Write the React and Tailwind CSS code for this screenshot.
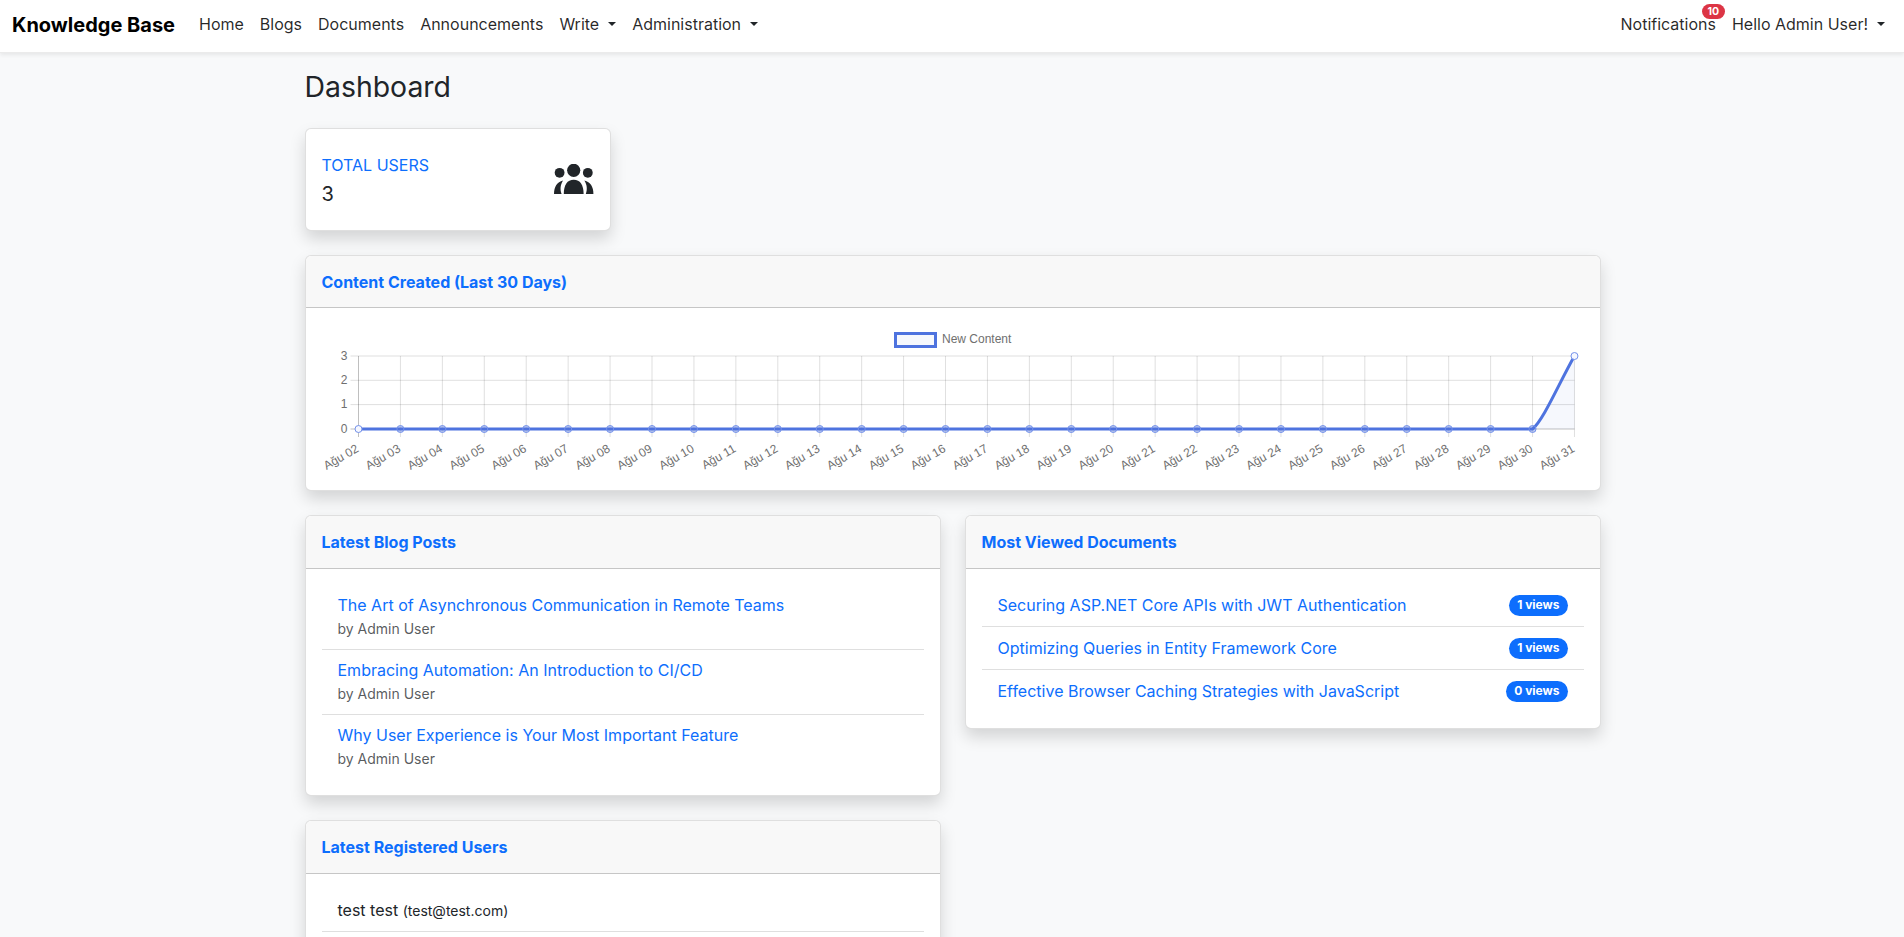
import React from 'react';

const days = Array.from({ length: 30 }, (_, i) => String(i + 2).padStart(2, '0'));
const xAt = (i) => 358.5 + i * 41.93 - 306;

const navLinkClass = 'px-2 text-[16px] text-[#000000d9] leading-6 whitespace-nowrap';

function NavDropdown({ label }) {
  return (
    <span className={`${navLinkClass} flex items-center`}>
      {label}
      <span className="ml-[9px] w-0 h-0 border-x-[4px] border-x-transparent border-t-[4px] border-t-[#212529]" />
    </span>
  );
}

function UsersIcon() {
  return (
    <svg width="40" height="30" viewBox="0 0 40 30" fill="#212529" className="block mb-[2px]">
      <circle cx="19.7" cy="6.3" r="6.6" />
      <circle cx="5.6" cy="8.8" r="4.9" />
      <circle cx="33.8" cy="8.8" r="4.9" />
      <path d="M9.8 30C9.8 21 13.2 15.8 19.7 15.8C26.2 15.8 29.6 21 29.6 30Z" />
      <path d="M0 30C0 23 3 18 9 16.6C6.2 21 6 26 7.6 30Z" />
      <path d="M39.4 30C39.4 23 36.4 18 30.4 16.6C33.2 21 33.4 26 31.8 30Z" />
    </svg>
  );
}

function Card({ title, children, className = '', headerClass = 'h-[53px]' }) {
  return (
    <div className={`bg-white border border-[#00000020] rounded-md shadow-[0_8px_16px_rgba(0,0,0,0.15)] ${className}`}>
      <div className={`bg-[#f8f8f8] border-b border-[#00000033] rounded-t-md px-4 flex items-center ${headerClass}`}>
        <h6 className="text-[16px] font-bold text-[#0d6efd]">{title}</h6>
      </div>
      {children}
    </div>
  );
}

function ContentChart() {
  const ys = [429, 404.6, 380.3, 356];
  const x28 = xAt(28);
  const x29 = xAt(29);
  const curve = `C${x28 + 11} 420 ${x28 + 26} 384 ${x29} 356`;
  return (
    <svg width="1294" height="182" viewBox="0 0 1294 182" className="block">
      <g transform="translate(0,-308)">
        <rect x="589.5" y="333.5" width="40" height="13" fill="#4e73df0d" stroke="#4e73df" strokeWidth="3" />
        <text x="636" y="343" fontSize="12" fill="#6f6f6f" fontFamily="Liberation Sans, sans-serif">New Content</text>
        {ys.map((y, i) => (
          <g key={y}>
            <line x1={xAt(0) - 8} x2={x29} y1={y} y2={y} stroke={i === 0 ? '#00000040' : '#00000020'} strokeWidth="1" />
            <text x={xAt(0) - 11} y={y + 3.5} fontSize="12" fill="#6f6f6f" textAnchor="end" fontFamily="Liberation Sans, sans-serif">{i}</text>
          </g>
        ))}
        {days.map((d, i) => (
          <g key={d}>
            <line x1={xAt(i)} x2={xAt(i)} y1="356" y2="437" stroke={i === 0 ? '#00000040' : '#00000020'} strokeWidth="1" />
            <text
              x={xAt(i) + 1}
              y="451"
              fontSize="12"
              fill="#6f6f6f"
              textAnchor="end"
              transform={`rotate(-30 ${xAt(i) + 1} 451)`}
              fontFamily="Liberation Sans, sans-serif"
            >
              Ağu {d}
            </text>
          </g>
        ))}
        <path d={`M${x28} 429 ${curve} L${x29} 429 Z`} fill="#4e73df0d" />
        <path d={`M${xAt(0)} 429 L${x28} 429 ${curve}`} fill="none" stroke="#4e73df" strokeWidth="3" />
        {days.map((d, i) => (
          <circle
            key={d}
            cx={xAt(i)}
            cy={i === 29 ? 356 : 429}
            r="3.5"
            fill={i === 0 || i === 29 ? '#f5f7ff' : '#4e73df55'}
            stroke="#7391ea"
            strokeWidth="1"
          />
        ))}
      </g>
    </svg>
  );
}

const posts = [
  'The Art of Asynchronous Communication in Remote Teams',
  'Embracing Automation: An Introduction to CI/CD',
  'Why User Experience is Your Most Important Feature',
];

const documents = [
  ['Securing ASP.NET Core APIs with JWT Authentication', '1 views'],
  ['Optimizing Queries in Entity Framework Core', '1 views'],
  ['Effective Browser Caching Strategies with JavaScript', '0 views'],
];

export default function App() {
  return (
    <div className="h-screen overflow-hidden bg-[#f8f9fa] text-[#212529] text-[16px] leading-6 font-['Inter',sans-serif]">
      {/* Navbar */}
      <nav className="relative z-10 h-[53px] bg-white border-b border-[#00000014] shadow-[0_2px_4px_rgba(0,0,0,0.075)] pl-3 pr-[11px] pb-[5px] flex items-center">
        <span className="text-[20px] font-bold text-black mr-4 pt-[2px] whitespace-nowrap">Knowledge Base</span>
        <div className="flex items-center">
          <span className={navLinkClass}>Home</span>
          <span className={navLinkClass}>Blogs</span>
          <span className={navLinkClass}>Documents</span>
          <span className={navLinkClass}>Announcements</span>
          <NavDropdown label="Write" />
          <NavDropdown label="Administration" />
        </div>
        <div className="ml-auto flex items-center">
          <span className={`${navLinkClass} relative`}>
            Notifications
            <span className="absolute left-[89px] -top-2 h-[15px] px-[6px] rounded-full bg-[#dc3545] text-white text-[10.5px] font-bold leading-[15px]">10</span>
          </span>
          <NavDropdown label="Hello Admin User!" />
        </div>
      </nav>

      {/* Page body */}
      <main className="w-[1296px] ml-[304.5px]">
        <h1 className="text-[28.4px] font-normal leading-[34px] mt-[17px] mb-[24px] h-[34px]">Dashboard</h1>

        <div className="w-[306px] h-[103px] bg-white border border-[#00000020] rounded-md shadow-[0_8px_16px_rgba(0,0,0,0.15)] p-4 flex items-center justify-between mb-6">
          <div>
            <div className="text-[#0d6efd]">TOTAL USERS</div>
            <div className="text-[20px] mt-[5px]">3</div>
          </div>
          <UsersIcon />
        </div>

        <Card title="Content Created (Last 30 Days)" className="mb-6" headerClass="h-[52px]">
          <ContentChart />
        </Card>

        <div className="grid grid-cols-2 gap-6 items-start">
          <div className="flex flex-col gap-6">
            <Card title="Latest Blog Posts">
              <div className="p-4">
                {posts.map((p, i) => (
                  <div key={p} className={`px-4 py-2 ${i < 2 ? 'border-b border-[#00000020]' : ''}`}>
                    <div className="text-[#0d6efd]">{p}</div>
                    <div className="text-[14px] leading-6 text-[#212529bf]">by Admin User</div>
                  </div>
                ))}
              </div>
            </Card>
            <Card title="Latest Registered Users">
              <div className="p-4">
                <div className="px-4 py-2 border-b border-[#00000020]">
                  test test <span className="text-[14px]">(test@test.com)</span>
                </div>
                <div className="h-20" />
              </div>
            </Card>
          </div>
          <Card title="Most Viewed Documents">
            <div className="px-4 pt-[15px] pb-4">
              {documents.map(([name, views], i) => (
                <div key={name} className={`px-4 py-[9px] flex items-center justify-between ${i < 2 ? 'border-b border-[#00000020]' : ''}`}>
                  <span className="text-[#0d6efd]">{name}</span>
                  <span className="bg-[#0d6efd] text-white text-[12px] font-bold leading-[12px] px-[8px] py-[4.5px] rounded-full">{views}</span>
                </div>
              ))}
            </div>
          </Card>
        </div>
      </main>
    </div>
  );
}
